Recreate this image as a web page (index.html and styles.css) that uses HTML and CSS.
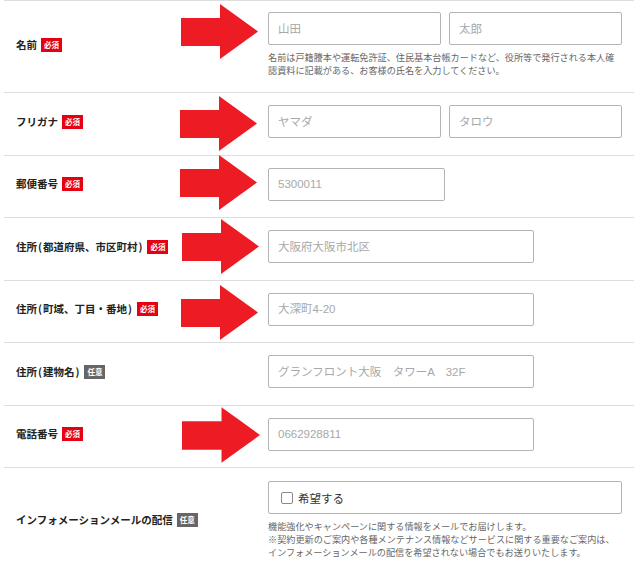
FILE: index.html
```html
<!DOCTYPE html>
<html lang="ja">
<head>
<meta charset="utf-8">
<title>お客様情報</title>
<link rel="stylesheet" href="styles.css">
</head>
<body>
<div class="form">
  <div class="row first">
    <div class="label">名前<span class="badge req">必須</span></div>
    <div class="field">
      <div class="pair">
        <input class="input half" placeholder="山田">
        <input class="input half" placeholder="太郎">
      </div>
      <p class="note wrap">名前は戸籍謄本や運転免許証、住民基本台帳カードなど、役所等で発行される本人確認資料に記載がある、お客様の氏名を入力してください。</p>
    </div>
    <svg class="arrow a1" viewBox="0 0 77 55"><polygon points="0,14 39,14 39,0 77,27.5 39,55 39,42 0,42"/></svg>
  </div>
  <div class="row">
    <div class="label">フリガナ<span class="badge req">必須</span></div>
    <div class="field">
      <div class="pair">
        <input class="input half" placeholder="ヤマダ">
        <input class="input half" placeholder="タロウ">
      </div>
    </div>
    <svg class="arrow a2" viewBox="0 0 77 55"><polygon points="0,14 39,14 39,0 77,27.5 39,55 39,42 0,42"/></svg>
  </div>
  <div class="row">
    <div class="label">郵便番号<span class="badge req">必須</span></div>
    <div class="field">
      <input class="input short" placeholder="5300011">
    </div>
    <svg class="arrow a3" viewBox="0 0 77 55"><polygon points="0,14 39,14 39,0 77,27.5 39,55 39,42 0,42"/></svg>
  </div>
  <div class="row">
    <div class="label">住所<span class="paren">(</span>都道府県、市区町村<span class="paren">)</span><span class="badge req">必須</span></div>
    <div class="field">
      <input class="input mid" placeholder="大阪府大阪市北区">
    </div>
    <svg class="arrow a4" viewBox="0 0 77 55"><polygon points="0,14 39,14 39,0 77,27.5 39,55 39,42 0,42"/></svg>
  </div>
  <div class="row">
    <div class="label">住所<span class="paren">(</span>町域、丁目・番地<span class="paren">)</span><span class="badge req">必須</span></div>
    <div class="field">
      <input class="input mid" placeholder="大深町4-20">
    </div>
    <svg class="arrow a5" viewBox="0 0 77 55"><polygon points="0,14 39,14 39,0 77,27.5 39,55 39,42 0,42"/></svg>
  </div>
  <div class="row">
    <div class="label">住所<span class="paren">(</span>建物名<span class="paren">)</span><span class="badge opt">任意</span></div>
    <div class="field">
      <input class="input mid" placeholder="グランフロント大阪　タワーA　32F">
    </div>
  </div>
  <div class="row">
    <div class="label">電話番号<span class="badge req">必須</span></div>
    <div class="field">
      <input class="input mid" placeholder="0662928811">
    </div>
    <svg class="arrow a6" viewBox="0 0 77 55"><polygon points="0,14 39,14 39,0 77,27.5 39,55 39,42 0,42"/></svg>
  </div>
  <div class="row last">
    <div class="label">インフォメーションメールの配信<span class="badge opt">任意</span></div>
    <div class="field">
      <label class="check">
        <span class="box"></span>
        <span class="check-text">希望する</span>
      </label>
      <p class="note">機能強化やキャンペーンに関する情報をメールでお届けします。<br>※契約更新のご案内や各種メンテナンス情報などサービスに関する重要なご案内は、<br>インフォメーションメールの配信を希望されない場合でもお送りいたします。</p>
    </div>
  </div>
</div>
</body>
</html>
```

FILE: styles.css
```css
* { box-sizing: border-box; }

html, body {
  margin: 0;
  padding: 0;
  background: #fff;
}

body {
  font-family: "Noto Sans CJK JP", "Noto Sans", sans-serif;
  color: #222;
  overflow: hidden;
}

.form {
  margin: 0 6px 0 4px;
  width: 630px;
}

.row {
  position: relative;
  display: grid;
  grid-template-columns: 264px 1fr;
  align-items: center;
  padding: 12px 0 16.5px;
  border-bottom: 1px solid #dedede;
}

.row.first {
  border-top: 1px solid #dedede;
  padding: 11px 0 15px;
}

.row.last {
  border-bottom: none;
  padding: 13px 0 0;
}

.label {
  padding-left: 12px;
  font-size: 10.5px;
  font-weight: 700;
  line-height: 14px;
  color: #222;
  display: flex;
  align-items: center;
  white-space: nowrap;
}

.paren {
  margin: 0 1px;
}

.badge {
  display: inline-flex;
  align-items: center;
  justify-content: center;
  width: 21px;
  height: 14px;
  margin-left: 4px;
  font-size: 7.5px;
  font-weight: 700;
  color: #fff;
  line-height: 1;
}

.badge.req { background: #e50012; }
.badge.opt { background: #666; }

.field {
  display: flex;
  flex-direction: column;
  align-items: flex-start;
}

.pair {
  display: flex;
  gap: 8px;
}

.input {
  height: 33px;
  border: 1px solid #b4b4b4;
  border-radius: 2px;
  padding: 0 9px;
  font-family: "Liberation Sans", "Noto Sans CJK JP", sans-serif;
  font-size: 11.5px;
  color: #333;
  background: #fff;
  outline: none;
}

.input::placeholder { color: #a8a8a8; }

.half { width: 173px; }
.short { width: 177px; }
.mid { width: 266px; }

.note {
  margin: 6px 0 0;
  font-size: 9.15px;
  line-height: 13px;
  color: #666;
  width: 354px;
}

.check {
  display: flex;
  align-items: center;
  width: 354px;
  height: 33px;
  border: 1px solid #b4b4b4;
  border-radius: 2px;
  padding-left: 12px;
}

.box {
  width: 12px;
  height: 12px;
  border: 1px solid #888;
  border-radius: 2px;
  background: #fff;
}

.check-text {
  margin-left: 5px;
  font-size: 11.5px;
  color: #333;
}

.arrow {
  position: absolute;
  width: 77px;
  height: 55px;
  fill: #ed1c24;
  top: 3px;
  left: 177px;
}

.a2 { left: 176px; top: 3px; }
.a3 { left: 176px; top: -1px; }
.a4 { left: 178px; top: 1px; }
.a5 { left: 177px; top: 4px; }
.a6 { left: 178px; top: 1px; width: 78px; height: 56px; }
```
